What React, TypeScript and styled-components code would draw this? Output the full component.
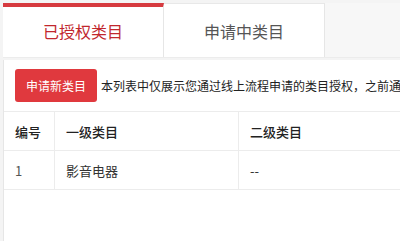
import React from 'react';
import styled, { createGlobalStyle } from 'styled-components';

const GlobalStyle = createGlobalStyle`
  html, body {
    margin: 0;
    padding: 0;
    background: #f4f4f4;
    font-family: 'Noto Sans CJK SC', 'Noto Sans', Arial, sans-serif;
  }
`;

const Page = styled.div`
  padding: 3px 0 0 3px;
  height: 241px;
  box-sizing: border-box;
  display: flex;
  flex-direction: column;
  overflow: hidden;
`;

const TabBar = styled.div`
  display: flex;
  height: 55px;
  background: #f7f7f7;
  border-bottom: 1px solid #ececec;
  box-sizing: border-box;
  flex-shrink: 0;
`;

const Tab = styled.div<{ active?: boolean }>`
  width: 161px;
  box-sizing: border-box;
  display: flex;
  align-items: center;
  justify-content: center;
  background: #fff;
  font-size: 16px;
  color: ${p => (p.active ? '#c1272d' : '#555')};
  border-top: ${p => (p.active ? '4px solid #d63a3f' : '1px solid #e8e8e8')};
  border-right: 1px solid #e6e6e6;
  padding-bottom: ${p => (p.active ? '2px' : '0')};
`;

const Panel = styled.div`
  margin-top: 2px;
  flex: 1;
  background: #fff;
  border-left: 1px solid #e6e6e6;
`;

const Toolbar = styled.div`
  display: flex;
  align-items: center;
  padding: 9px 0 0 11px;
  white-space: nowrap;
  overflow: hidden;
`;

const PrimaryButton = styled.button`
  flex-shrink: 0;
  width: 82px;
  height: 33px;
  border: none;
  border-radius: 3px;
  background: #e0393e;
  color: #fff;
  font-family: inherit;
  font-size: 12px;
  padding: 0;
`;

const Note = styled.span`
  margin-left: 4px;
  font-size: 12px;
  color: #222;
`;

const Table = styled.div`
  margin-top: 9px;
  border-top: 1px solid #ececec;
`;

const Row = styled.div`
  display: grid;
  grid-template-columns: 50px 184px 1fr;
  height: 39px;
  border-bottom: 1px solid #ececec;
  box-sizing: border-box;
`;

const Cell = styled.div<{ head?: boolean; muted?: boolean }>`
  display: flex;
  align-items: center;
  padding-left: 11px;
  font-size: 13px;
  font-weight: ${p => (p.head ? 500 : 400)};
  color: ${p => (p.head ? '#222' : p.muted ? '#555' : '#333')};
  & + & {
    border-left: 1px solid #ececec;
  }
`;

const rows = [{ id: 1, first: '影音电器', second: '--' }];

export default function App() {
  return (
    <>
      <GlobalStyle />
      <Page>
        <TabBar>
          <Tab active>已授权类目</Tab>
          <Tab>申请中类目</Tab>
        </TabBar>
        <Panel>
          <Toolbar>
            <PrimaryButton>申请新类目</PrimaryButton>
            <Note>本列表中仅展示您通过线上流程申请的类目授权，之前通过线下方式申请的类目授权请联系对应的招商人员</Note>
          </Toolbar>
          <Table>
            <Row>
              <Cell head>编号</Cell>
              <Cell head>一级类目</Cell>
              <Cell head>二级类目</Cell>
            </Row>
            {rows.map(r => (
              <Row key={r.id}>
                <Cell muted>{r.id}</Cell>
                <Cell>{r.first}</Cell>
                <Cell>{r.second}</Cell>
              </Row>
            ))}
          </Table>
        </Panel>
      </Page>
    </>
  );
}
